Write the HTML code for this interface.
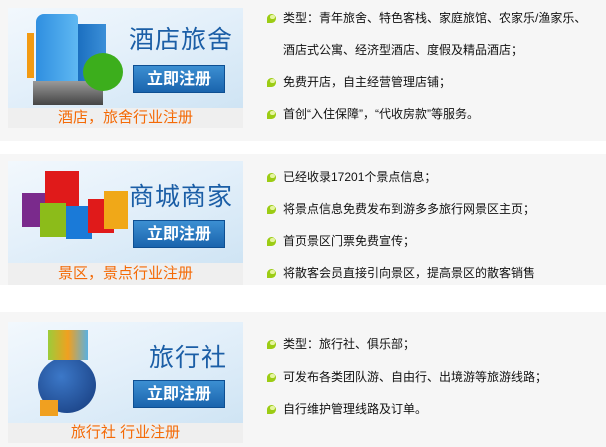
<!DOCTYPE html>
<html><head><meta charset="utf-8"><style>
*{margin:0;padding:0}
body{width:606px;height:447px;background:#fff;position:relative;overflow:hidden;font-family:"Liberation Sans","Noto Sans CJK SC",sans-serif}
.p{position:absolute;left:0;width:606px;background:#f6f6f6}
.img{position:absolute;left:8px;width:235px;background:linear-gradient(160deg,#f2f8fd 0%,#e4f0fa 45%,#cfe4f4 100%);overflow:hidden}
.img .sw{position:absolute;left:150px;top:-20px;width:200px;height:60px;border-top:2px solid rgba(255,255,255,.8);border-radius:50%;transform:rotate(25deg)}
.t{position:absolute;color:#1b5ea6;font-size:25px;letter-spacing:1px;white-space:nowrap}
.btn{position:absolute;left:125px;width:92px;height:28px;background:linear-gradient(#3c8fd2,#1a64ad);border:1px solid #0e4f92;color:#fff;font-size:16px;font-weight:bold;text-align:center;line-height:28px;box-sizing:border-box}
.cap{position:absolute;left:8px;width:235px;height:20px;background:#efefef;color:#f46a06;font-size:15px;text-align:center;line-height:20px}
.r{position:absolute;left:267px;font-size:12px;color:#111;white-space:nowrap;line-height:14px}
.r i{display:inline-block;width:9px;height:9px;background:#9ccc14;border-radius:5px 5px 5px 0;margin-right:7px;vertical-align:-1px;position:relative}
.r i:after{content:"";position:absolute;left:3px;top:1px;width:5px;height:4px;background:#e5f5a0;border-radius:2px}
.r.n{left:283px}
</style></head><body>
<div class="p" style="top:0;height:141px">
 <div class="img" style="top:8px;height:100px"><div class="sw"></div>
  <div style="position:absolute;left:28px;top:6px;width:42px;height:75px;background:linear-gradient(90deg,#2f8fe0,#5fb8f2);border-radius:8px 4px 0 0"></div>
  <div style="position:absolute;left:70px;top:16px;width:28px;height:62px;background:linear-gradient(90deg,#1b6fc0,#3b8fd8)"></div>
  <div style="position:absolute;left:25px;top:73px;width:70px;height:24px;background:linear-gradient(#9a9a9a,#444)"></div>
  <div style="position:absolute;left:19px;top:25px;width:7px;height:45px;background:#f29a12"></div>
  <div style="position:absolute;left:75px;top:45px;width:40px;height:38px;background:#3cae1c;border-radius:50%"></div>
  <div class="t" style="left:121px;top:12px">酒店旅舍</div>
  <div class="btn" style="top:57px">立即注册</div>
 </div>
 <div class="cap" style="top:108px">酒店，旅舍行业注册</div>
 <div class="r" style="top:11px"><i></i>类型：青年旅舍、特色客栈、家庭旅馆、农家乐/渔家乐、</div>
 <div class="r n" style="top:43px">酒店式公寓、经济型酒店、度假及精品酒店；</div>
 <div class="r" style="top:75px"><i></i>免费开店，自主经营管理店铺；</div>
 <div class="r" style="top:107px"><i></i>首创“入住保障”，“代收房款”等服务。</div>
</div>
<div class="p" style="top:154px;height:131px">
 <div class="img" style="top:7px;height:102px"><div class="sw"></div>
  <div style="position:absolute;left:14px;top:32px;width:26px;height:34px;background:#7a2a8c"></div>
  <div style="position:absolute;left:37px;top:10px;width:34px;height:36px;background:#e01a1a"></div>
  <div style="position:absolute;left:32px;top:42px;width:26px;height:34px;background:#8cbc1a"></div>
  <div style="position:absolute;left:58px;top:45px;width:26px;height:33px;background:#1a7ad8"></div>
  <div style="position:absolute;left:80px;top:38px;width:26px;height:34px;background:#e01a1a"></div>
  <div style="position:absolute;left:96px;top:30px;width:24px;height:38px;background:#f0a818"></div>
  <div class="t" style="left:121px;top:16px">商城商家</div>
  <div class="btn" style="top:59px">立即注册</div>
 </div>
 <div class="cap" style="top:109px;height:22px;line-height:22px">景区，景点行业注册</div>
 <div class="r" style="top:16px"><i></i>已经收录17201个景点信息；</div>
 <div class="r" style="top:48px"><i></i>将景点信息免费发布到游多多旅行网景区主页；</div>
 <div class="r" style="top:80px"><i></i>首页景区门票免费宣传；</div>
 <div class="r" style="top:112px"><i></i>将散客会员直接引向景区，提高景区的散客销售</div>
</div>
<div class="p" style="top:312px;height:135px">
 <div class="img" style="top:10px;height:101px"><div class="sw"></div>
  <div style="position:absolute;left:30px;top:35px;width:58px;height:56px;background:radial-gradient(circle at 40% 35%,#3c78c8,#15397a);border-radius:50%"></div>
  <div style="position:absolute;left:40px;top:8px;width:40px;height:30px;background:linear-gradient(90deg,#9ccc3a,#f0a020,#5ab0e0)"></div>
  <div style="position:absolute;left:32px;top:78px;width:18px;height:16px;background:#f0a020"></div>
  <div class="t" style="left:141px;top:16px">旅行社</div>
  <div class="btn" style="top:58px">立即注册</div>
 </div>
 <div class="cap" style="top:111px">旅行社 行业注册</div>
 <div class="r" style="top:25px"><i></i>类型：旅行社、俱乐部；</div>
 <div class="r" style="top:58px"><i></i>可发布各类团队游、自由行、出境游等旅游线路；</div>
 <div class="r" style="top:90px"><i></i>自行维护管理线路及订单。</div>
</div>
</body></html>
